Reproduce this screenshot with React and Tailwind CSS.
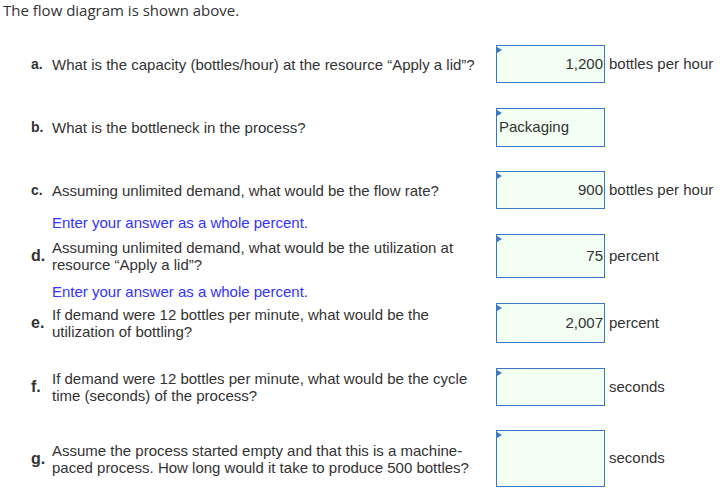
import React from 'react';

const Box = ({ h, value, left }) => (
  <div
    className={`relative w-[109px] shrink-0 border border-[#3b78c2] bg-[#f2fff2] flex items-center ${h} ${left ? 'justify-start pl-[2px]' : 'justify-end pr-[1px]'} text-[15px] text-[#333]`}
  >
    <span className="absolute left-0 top-[1px] w-0 h-0 border-y-[3px] border-y-transparent border-l-[5px] border-l-[#3b78c2]" />
    {value}
  </div>
);

const Row = ({ label, big, children, h, value, left, unit, mt }) => (
  <div className={`flex items-center ${mt}`}>
    <div className={`w-[21px] pl-[31px] box-content font-bold text-[#333] ${big ? 'text-[16px]' : 'text-[14px]'}`}>{label}</div>
    <div className="w-[444px] text-[15px] leading-[17px] text-[#333]">{children}</div>
    <Box h={h} value={value} left={left} />
    {unit && <div className="ml-[4px] text-[15px] text-[#333]">{unit}</div>}
  </div>
);

const Hint = ({ mt }) => (
  <div className={`pl-[52px] text-[15px] leading-[18px] text-[#3333ff] ${mt}`}>
    Enter your answer as a whole percent.
  </div>
);

export default function App() {
  return (
    <div className="w-[724px] h-[500px] bg-white overflow-hidden font-['Liberation_Sans',Arial,sans-serif]">
      <div className="pl-[3px] text-[15px] leading-[21px] text-[#333] font-['Open_Sans',sans-serif]">
        The flow diagram is shown above.
      </div>
      <Row label="a." mt="mt-[24px]" h="h-[38px]" value="1,200" unit="bottles per hour">
        What is the capacity (bottles/hour) at the resource “Apply a lid”?
      </Row>
      <Row label="b." mt="mt-[25px]" h="h-[39px]" value="Packaging" left>
        What is the bottleneck in the process?
      </Row>
      <Row label="c." mt="mt-[24px]" h="h-[38px]" value="900" unit="bottles per hour">
        Assuming unlimited demand, what would be the flow rate?
      </Row>
      <Hint mt="mt-[5px]" />
      <Row label="d." big mt="mt-[2px]" h="h-[44px]" value="75" unit="percent">
        Assuming unlimited demand, what would be the utilization at<br />resource “Apply a lid”?
      </Row>
      <Hint mt="mt-[5px]" />
      <Row label="e." big mt="mt-[2px]" h="h-[40px]" value="2,007" unit="percent">
        If demand were 12 bottles per minute, what would be the<br />utilization of bottling?
      </Row>
      <Row label="f." big mt="mt-[25px]" h="h-[38px]" value="" unit="seconds">
        If demand were 12 bottles per minute, what would be the cycle<br />time (seconds) of the process?
      </Row>
      <Row label="g." big mt="mt-[24px]" h="h-[57px]" value="" unit="seconds">
        Assume the process started empty and that this is a machine-<br />paced process. How long would it take to produce 500 bottles?
      </Row>
    </div>
  );
}
